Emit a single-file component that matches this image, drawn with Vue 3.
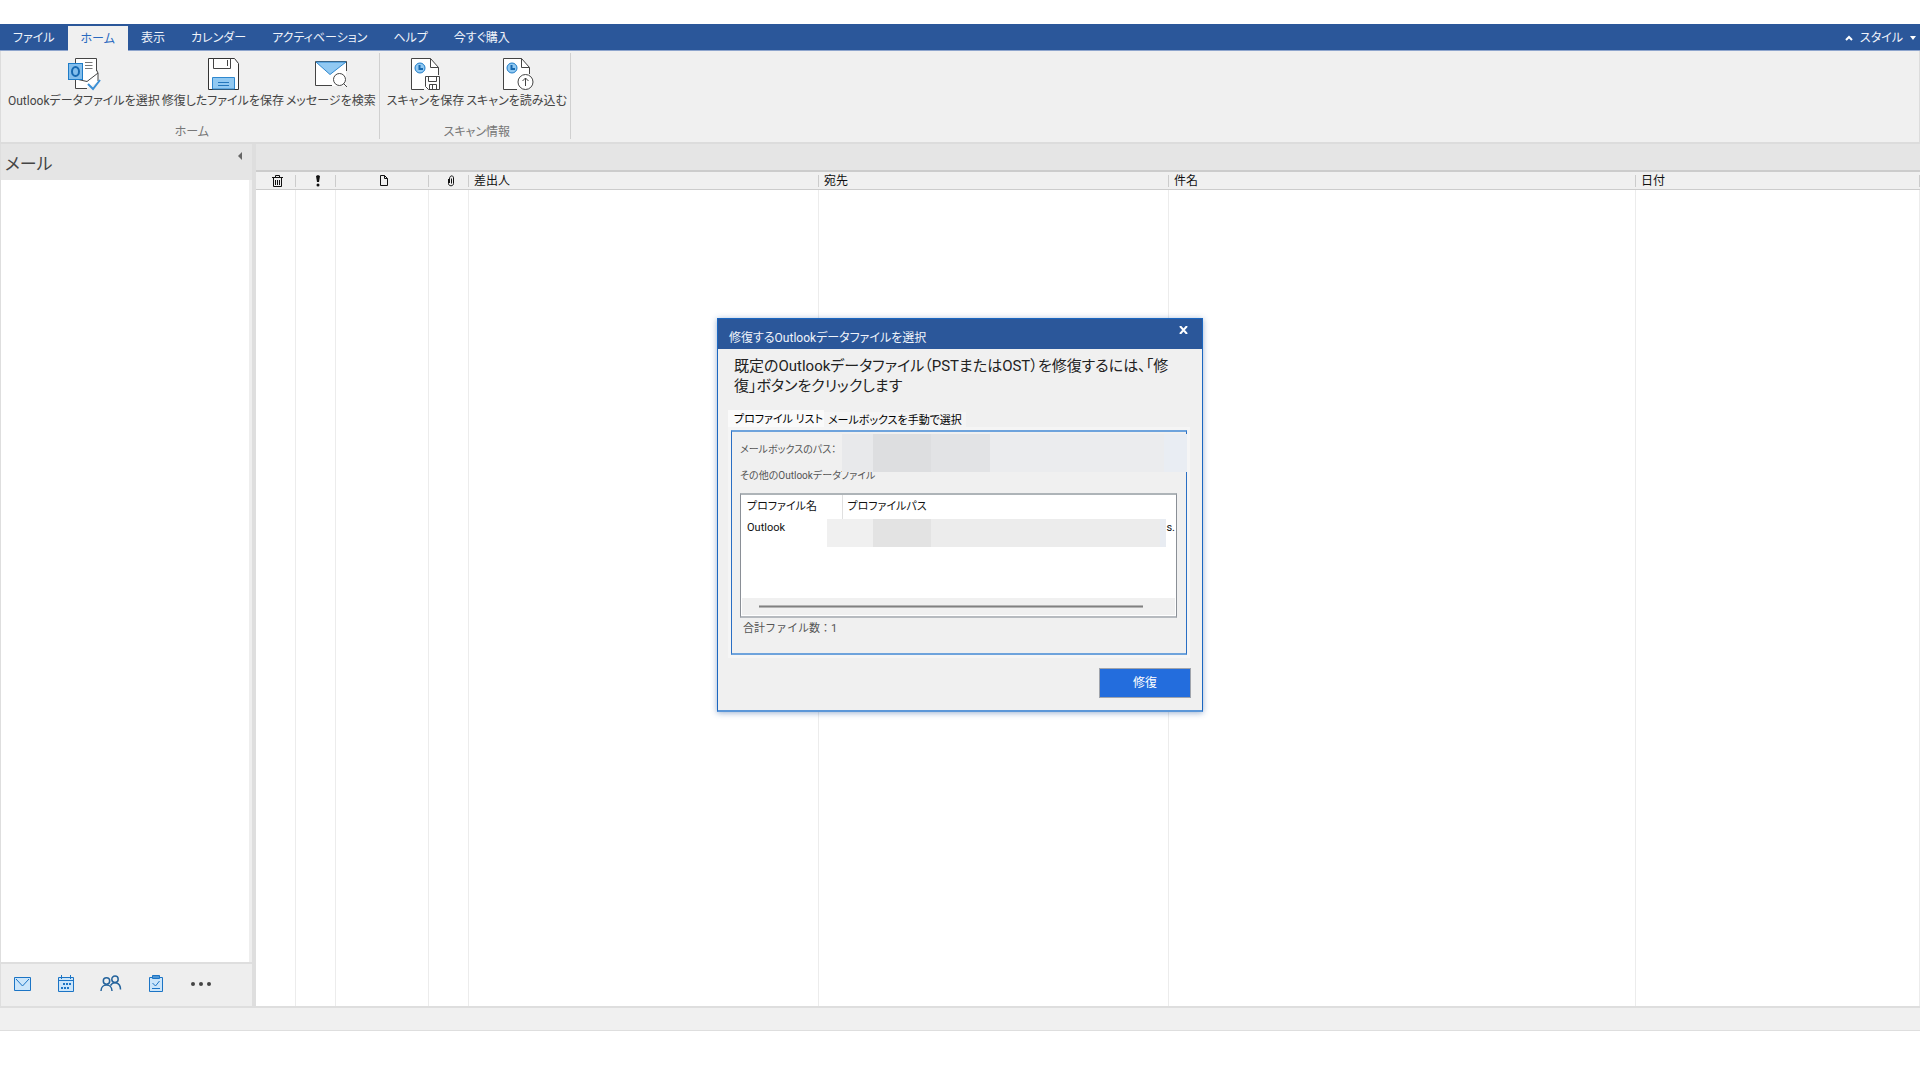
<template>
    <div class="app">
        <nav class="menubar">
            <button v-for="m in menus" :key="m" type="button" class="menu" :class="{ active: m === activeMenu }" @click="activeMenu = m">{{ m }}</button>
            <button type="button" class="menu style-menu">
                <svg width="8" height="6" viewBox="0 0 8 6"><path d="M1 5l3-3 3 3" fill="none" stroke="#fff" stroke-width="2"/></svg>
                <span>スタイル</span>
                <svg width="6" height="4" viewBox="0 0 6 4"><path d="M0 0h6L3 4z" fill="#fff"/></svg>
            </button>
        </nav>

        <div class="ribbon">
            <section class="group">
                <div class="tools">
                    <button type="button" class="tool">
                        <svg width="34" height="34" viewBox="0 0 34 34" fill="none">
                            <path d="M8 31V1h21v13l2 3v8L20 31z" fill="#fff"/>
                            <path d="M8.500 6V1.500h21V14M8.500 22v9.500H20M9 22l11 2.500 11-8.500v8M29.500 13l1.500 3" stroke="#444"/>
                            <path d="M18 5.500h7.500M18 8.500h7.500M18 11.500h7.500" stroke="#777"/>
                            <rect x="1.500" y="6.500" width="14" height="16" fill="#83beec" stroke="#1e7cc8"/>
                            <ellipse cx="8.500" cy="14.500" rx="3.500" ry="4.500" stroke="#1668b0" stroke-width="2"/>
                            <path d="M21 27l5 5 7-9" stroke="#3a8fd6" stroke-width="2"/>
                        </svg>
                        <span>Outlookデータファイルを選択</span>
                    </button>
                    <button type="button" class="tool">
                        <svg width="34" height="34" viewBox="0 0 34 34" fill="none">
                            <path d="M2.500 1.500h26l4 5v26h-30z" fill="#fff" stroke="#333"/>
                            <path d="M7.500 1.500v10h17v-10M21.500 3v6" stroke="#444"/>
                            <path d="M6.500 32V20.500h22V32z" fill="#91c9f2" stroke="#2f88cf"/>
                            <path d="M12 25.500h11M12 28.500h11" stroke="#2477bc"/>
                        </svg>
                        <span>修復したファイルを保存</span>
                    </button>
                    <button type="button" class="tool">
                        <svg width="34" height="34" viewBox="0 0 34 34" fill="none">
                            <path d="M1 4h31v25H1z" fill="#fff"/>
                            <path d="M32.500 14V4.500h-31v24H18" stroke="#444"/>
                            <path d="M2 5h30L16 17.500z" fill="#91c9f2" stroke="#2f88cf"/>
                            <circle cx="25.500" cy="22.500" r="6" fill="#fff" stroke="#444"/>
                            <path d="M29.500 26.500l3.500 3.500" stroke="#444"/>
                        </svg>
                        <span>メッセージを検索</span>
                    </button>
                </div>
                <div class="caption">ホーム</div>
            </section>
            <section class="group">
                <div class="tools">
                    <button type="button" class="tool">
                        <svg width="34" height="34" viewBox="0 0 34 34" fill="none">
                            <path d="M3 1h19l8 9v22H3z" fill="#fff"/>
                            <path d="M16 32.500H3.500v-31h19l8 9V18M22.500 1.500v9h8" stroke="#444"/>
                            <circle cx="12" cy="11" r="5" fill="#91c9f2" stroke="#1e7cc8"/>
                            <path d="M11.500 8v4H15" stroke="#1668b0" stroke-width="2"/>
                            <path d="M17.500 19.500h14v13h-11l-3-3z" fill="#fff" stroke="#444"/>
                            <path d="M20.500 19.500v5h8v-5M21.500 32.500v-5h7v5M24.500 28v4" stroke="#444"/>
                        </svg>
                        <span>スキャンを保存</span>
                    </button>
                    <button type="button" class="tool">
                        <svg width="34" height="34" viewBox="0 0 34 34" fill="none">
                            <path d="M3 1h18l8 9v22H3z" fill="#fff"/>
                            <path d="M17 32.500H3.500v-31h18l8 9V17M21.500 1.500v9h8" stroke="#444"/>
                            <circle cx="12" cy="11" r="5" fill="#91c9f2" stroke="#1e7cc8"/>
                            <path d="M11.500 8v4H15" stroke="#1668b0" stroke-width="2"/>
                            <circle cx="25.500" cy="25" r="7.500" fill="#fff" stroke="#444"/>
                            <path d="M25.500 29v-8M22.500 24l3-3 3 3" stroke="#444"/>
                        </svg>
                        <span>スキャンを読み込む</span>
                    </button>
                </div>
                <div class="caption">スキャン情報</div>
            </section>
        </div>

        <div class="workspace">
            <aside class="sidebar">
                <header class="side-head">
                    <h2>メール</h2>
                    <button type="button" class="collapse" aria-label="折りたたむ">
                        <svg width="4" height="8" viewBox="0 0 4 8"><path d="M4 0v8L0 4z" fill="#666"/></svg>
                    </button>
                </header>
                <div class="tree"></div>
                <div class="switcher">
                    <button type="button" aria-label="メール">
                        <svg width="18" height="18" viewBox="0 0 18 18" fill="none"><path d="M.5 2.500h16v13H.5z" fill="#cbe5fa" stroke="#1b74c5"/><path d="M2 4l6.500 7L15 4" stroke="#1b74c5"/></svg>
                    </button>
                    <button type="button" aria-label="カレンダー">
                        <svg width="18" height="18" viewBox="0 0 18 18" fill="none"><path d="M1.500 2.500h15v14h-15z" fill="#cbe5fa" stroke="#1b74c5"/><path d="M1 5.500h15M4.500 0v4M13.500 0v4" stroke="#1b74c5"/><path d="M6 9h8M4 13h8" stroke="#1b74c5" stroke-width="2" stroke-dasharray="2 1"/></svg>
                    </button>
                    <button type="button" aria-label="連絡先">
                        <svg width="22" height="18" viewBox="0 0 22 18" fill="none" stroke="#24639c" stroke-width="1.500"><circle cx="6.500" cy="6" r="3.200"/><circle cx="15" cy="4.200" r="3.200"/><path d="M1 16c0-8 11-8 11 0M10.500 10.500c3-5 10-3 10 4"/></svg>
                    </button>
                    <button type="button" aria-label="タスク">
                        <svg width="18" height="18" viewBox="0 0 18 18" fill="none"><path d="M2.500 2.500h13v14h-13z" fill="#cbe5fa" stroke="#1b74c5"/><path d="M5.500.5h7v3h-7z" fill="#4f96d4" stroke="#1b74c5"/><path d="M5.500 8l3 3 4-5M5 13.500h8" stroke="#1b74c5"/></svg>
                    </button>
                    <button type="button" aria-label="その他">
                        <svg width="22" height="18" viewBox="0 0 22 18" fill="#444"><circle cx="3" cy="9" r="2"/><circle cx="11" cy="9" r="2"/><circle cx="19" cy="9" r="2"/></svg>
                    </button>
                </div>
            </aside>

            <main class="content">
                <div class="toolbar"></div>
                <table class="mails">
                    <colgroup>
                        <col class="c-del"><col class="c-flag"><col class="c-doc"><col class="c-clip"><col class="c-from"><col class="c-to"><col class="c-subject"><col>
                    </colgroup>
                    <thead>
                        <tr>
                            <th class="icon" aria-label="削除"><svg width="12" height="12" viewBox="0 0 12 12" fill="none" stroke="#111"><path d="M0 2.500h11M3.500 2V.5h4V2M1.500 3v8.500h8V3M3.500 5v5M5.500 5v5M7.500 5v5"/></svg></th>
                            <th class="icon" aria-label="重要度"><svg width="6" height="12" viewBox="0 0 6 12" fill="#111"><path d="M1 1l2-1 2 1-1 6H2z"/><circle cx="3" cy="10" r="1.500"/></svg></th>
                            <th class="icon" aria-label="種類"><svg width="10" height="12" viewBox="0 0 10 12" fill="none" stroke="#111"><path d="M1.500.5h4l3 3v7h-7zM5.500.5v3h3"/></svg></th>
                            <th class="icon" aria-label="添付"><svg width="8" height="12" viewBox="0 0 8 12" fill="none" stroke="#111"><path d="M2.500 8V4c0-4 4-4 4-1v5.500c0 3-5 3-5 0V4M4.500 3.500v5"/></svg></th>
                            <th v-for="c in columns" :key="c">{{ c }}</th>
                        </tr>
                    </thead>
                    <tbody>
                        <tr><td v-for="n in 8" :key="n"></td></tr>
                    </tbody>
                </table>
            </main>
        </div>

        <footer class="status"></footer>

        <div class="overlay">
            <div class="dialog" role="dialog" aria-labelledby="dlg-title">
                <header class="dlg-head">
                    <span id="dlg-title">修復するOutlookデータファイルを選択</span>
                    <button type="button" class="close" aria-label="閉じる">
                        <svg width="9" height="8" viewBox="0 0 9 8"><path d="M1 0l7 8M8 0L1 8" stroke="#fff" stroke-width="2"/></svg>
                    </button>
                </header>
                <p class="lead">既定のOutlookデータファイル（PSTまたはOST）を修復するには、「修<br>復」ボタンをクリックします</p>
                <div class="tabs" role="tablist">
                    <button v-for="(t, i) in tabs" :key="t" type="button" role="tab" :aria-selected="tab === i" :class="{ active: tab === i }" @click="tab = i">{{ t }}</button>
                </div>
                <div class="panel">
                    <div class="path-row">
                        <span>メールボックスのパス：</span>
                        <div class="mask"><i></i><i></i><i></i><i></i><i></i></div>
                    </div>
                    <div class="other">その他のOutlookデータファイル</div>
                    <div class="listbox">
                        <table class="profiles">
                            <thead>
                                <tr><th>プロファイル名</th><th>プロファイルパス</th></tr>
                            </thead>
                            <tbody>
                                <tr>
                                    <td>Outlook</td>
                                    <td><div class="cell"><div class="mask"><i></i><i></i><i></i><i></i></div><span>s.</span></div></td>
                                </tr>
                            </tbody>
                        </table>
                        <div class="scroll"><div class="thumb"></div></div>
                    </div>
                    <div class="total">合計ファイル数：1</div>
                </div>
                <div class="actions">
                    <button type="button" class="repair">修復</button>
                </div>
            </div>
        </div>
    </div>
</template>
<script setup>
import { ref } from 'vue'

const menus = ['ファイル', 'ホーム', '表示', 'カレンダー', 'アクティベーション', 'ヘルプ', '今すぐ購入']
const columns = ['差出人', '宛先', '件名', '日付']
const tabs = ['プロファイル リスト', 'メールボックスを手動で選択']

const activeMenu = ref('ホーム')
const tab = ref(0)
</script>
<style>
body {
    margin: 0;
    background: #fff;
}
</style>
<style scoped>
.app {
    position: relative;
    box-sizing: border-box;
    min-height: 100vh;
    padding: 24px 0 49px;
    display: flex;
    flex-direction: column;
    font-family: Roboto, "Noto Sans CJK JP", sans-serif;
    font-feature-settings: "palt";
    font-size: 12px;
    line-height: 18px;
    color: #444;
}
button {
    font: inherit;
    font-feature-settings: inherit;
    color: inherit;
    border: 0;
    padding: 0;
    background: none;
    white-space: nowrap;
}
svg {
    display: block;
}

.menubar {
    display: flex;
    height: 26px;
    background: #2b579a;
    border-bottom: 1px solid #8ea5cd;
}
.menu {
    padding: 2px 13px 0;
    color: #f0f4fa;
}
.menu.active {
    margin: 2px 0 -1px;
    padding-top: 0;
    background: #f0f0f0;
    color: #2a6ac0;
}
.style-menu {
    margin-left: auto;
    padding: 2px 4px 0;
    display: flex;
    align-items: center;
    gap: 7px;
}

.ribbon {
    display: flex;
    height: 91px;
    background: #f0f0f0;
    border: solid #dcdcdc;
    border-width: 0 1px 2px;
}
.group {
    display: flex;
    flex-direction: column;
    margin: 2px 0 3px;
    padding: 4px 2px 0 6px;
    border-right: 1px solid #d0d0d0;
}
.tools {
    display: flex;
}
.tool {
    display: flex;
    flex-direction: column;
    align-items: center;
    gap: 2px;
    padding: 0 1px;
    line-height: 16px;
}
.caption {
    margin-top: 15px;
    line-height: 16px;
    text-align: center;
    color: #777;
}

.workspace {
    flex: 1;
    display: flex;
}
.sidebar {
    box-sizing: border-box;
    width: 256px;
    display: flex;
    flex-direction: column;
    border: solid #dedede;
    border-width: 0 4px 0 1px;
    background: #eee;
}
.side-head {
    display: flex;
    justify-content: space-between;
    height: 36px;
    background: #e5e5e5;
}
.side-head h2 {
    margin: 9px 4px 0;
    font-size: 17px;
    font-weight: 400;
    line-height: 22px;
}
.collapse {
    height: 24px;
    padding: 0 10px;
}
.tree {
    flex: 1;
    margin-right: 3px;
    background: #fff;
}
.switcher {
    box-sizing: border-box;
    display: flex;
    align-items: center;
    gap: 25px;
    height: 44px;
    padding: 0 0 2px 13px;
    border-top: 2px solid #dedede;
}
.content {
    flex: 1;
    display: flex;
    flex-direction: column;
}
.toolbar {
    height: 26px;
    background: #e5e5e5;
}
.mails {
    flex: 1;
    width: 100%;
    table-layout: fixed;
    border-collapse: separate;
    border-spacing: 0;
    color: #111;
}
.c-del { width: 40px; }
.c-flag { width: 40px; }
.c-doc { width: 93px; }
.c-clip { width: 40px; }
.c-from, .c-to { width: 350px; }
.c-subject { width: 467px; }
.mails th {
    height: 17px;
    padding: 0 0 0 5px;
    line-height: 16px;
    text-align: left;
    font-weight: 400;
    background: linear-gradient(#ccc, #ccc) right / 1px 12px no-repeat #f0f0f0;
    border: solid #ccc;
    border-width: 2px 0 1px;
}
.mails .icon {
    padding-left: 3px;
}
.mails .icon svg {
    margin: 0 auto;
}
.mails td {
    padding: 0;
    border-right: 1px solid #ececec;
}
.status {
    height: 22px;
    background: #f0f0f0;
    border: solid #dedede;
    border-width: 2px 0 1px;
}

.overlay {
    position: absolute;
    top: 318px;
    left: 0;
    right: 0;
    display: flex;
    justify-content: center;
}
.dialog {
    width: 484px;
    background: #f0f0f0;
    border: 1px solid #1a66c0;
    border-bottom: 2px solid #5b96d8;
    box-shadow: 0 1px 6px rgba(30, 80, 150, 0.45);
    color: #222;
    font-size: 11px;
}
.dlg-head {
    display: flex;
    justify-content: space-between;
    height: 30px;
    padding: 0 14px 0 11px;
    background: #2b579a;
    color: #f0f4fa;
    font-size: 12px;
    line-height: 38px;
}
.close {
    height: 20px;
    padding-top: 2px;
}
.lead {
    margin: 7px 14px 0 16px;
    font-size: 15px;
    line-height: 20px;
    white-space: nowrap;
}
.tabs {
    display: flex;
    align-items: flex-end;
    margin: 14px 14px 0 10px;
}
.tabs button {
    height: 18px;
    padding: 0 4px;
    background: #f4f4f4;
    color: #000;
}
.tabs .active {
    height: 20px;
    padding: 0 1px 0 6px;
    background: #fafafa;
}
.panel {
    box-sizing: border-box;
    height: 225px;
    margin: 0 15px 0 13px;
    padding: 0 9px 0 8px;
    border: solid #2a6fc4;
    border-width: 2px 1px;
    border-top-color: #6ea3dc;
    border-bottom-color: #6ea3dc;
    outline: 3px solid #f5f5f5;
    color: #555;
}
.path-row {
    position: relative;
    height: 35px;
    line-height: 36px;
}
.path-row,
.other {
    font-size: 10px;
}
.mask {
    display: flex;
}
.path-row .mask {
    position: absolute;
    top: 2px;
    left: 102px;
    right: -10px;
    height: 38px;
}
.path-row i:nth-child(1) { width: 31px; background: #e8e9eb; }
.path-row i:nth-child(2) { width: 58px; background: #dddee0; }
.path-row i:nth-child(3) { width: 59px; background: #e2e3e5; }
.path-row i:nth-child(4) { flex: 1; background: #ebecee; }
.path-row i:nth-child(5) { width: 23px; background: #e9edf3; }
.listbox {
    box-sizing: border-box;
    height: 125px;
    margin-top: 8px;
    padding: 0 1px 1px;
    display: flex;
    flex-direction: column;
    justify-content: space-between;
    background: #fff;
    border: 1px solid #8a8f96;
    border-width: 2px 1px;
    border-top-color: #aeb4b8;
    border-bottom-color: #b6babf;
}
.profiles {
    width: 100%;
    table-layout: fixed;
    border-collapse: collapse;
    color: #111;
}
.profiles th {
    height: 24px;
    padding: 0 5px;
    text-align: left;
    font-weight: 400;
}
.profiles th:first-child {
    box-sizing: border-box;
    width: 100px;
    border-right: 1px solid #e0e0e0;
}
.profiles td {
    padding: 0 0 0 5px;
    vertical-align: top;
}
.profiles td:last-child {
    padding: 0;
}
.cell {
    display: flex;
    margin-left: -15px;
}
.cell .mask {
    flex: 1;
    height: 28px;
}
.cell i:nth-child(1) { width: 46px; background: #f0f0f0; }
.cell i:nth-child(2) { width: 58px; background: #e3e3e3; }
.cell i:nth-child(3) { flex: 1; background: #ececec; }
.cell i:nth-child(4) { width: 6px; background: #e8ecf2; }
.scroll {
    height: 17px;
    padding: 0 32px 0 17px;
    display: flex;
    align-items: center;
    background: #f0f0f0;
}
.thumb {
    flex: 1;
    height: 1px;
    background: #808080;
    border: solid #b4b4b4;
    border-width: 1px 0;
}
.total {
    margin: 2px 3px;
    font-feature-settings: normal;
}
.actions {
    display: flex;
    justify-content: flex-end;
    padding: 13px 11px 12px 0;
}
.repair {
    width: 92px;
    height: 30px;
    border: 1px solid #a0a4ac;
    background: #236ddd;
    color: #fff;
    font-size: 12px;
}
</style>
